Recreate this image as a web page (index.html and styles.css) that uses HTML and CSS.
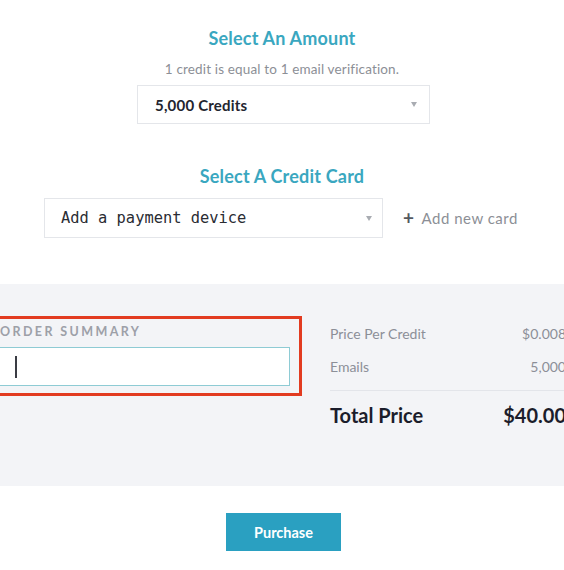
FILE: index.html
```html
<!DOCTYPE html>
<html lang="en">
<head>
<meta charset="utf-8">
<title>Purchase Credits</title>
<link rel="stylesheet" href="styles.css">
</head>
<body>
<main class="page">
  <section class="block amount">
    <h2 class="title">Select An Amount</h2>
    <p class="note">1 credit is equal to 1 email verification.</p>
    <div class="select select-amount">
      <span class="select-value">5,000 Credits</span>
      <span class="caret"></span>
    </div>
  </section>

  <section class="block card">
    <h2 class="title">Select A Credit Card</h2>
    <div class="card-row">
      <div class="select select-card">
        <span class="select-value mono">Add a payment device</span>
        <span class="caret"></span>
      </div>
      <a class="add-card"><span class="plus">+</span>Add new card</a>
    </div>
  </section>

  <section class="summary">
    <div class="summary-inner">
      <div class="order">
        <div class="order-label">ORDER SUMMARY</div>
        <div class="order-input"><span class="cursor"></span></div>
      </div>
      <div class="totals">
        <div class="row"><span>Price Per Credit</span><span>$0.008</span></div>
        <div class="row"><span>Emails</span><span>5,000</span></div>
        <div class="row total"><span>Total Price</span><span>$40.00</span></div>
      </div>
    </div>
  </section>

  <div class="actions">
    <button class="purchase">Purchase</button>
  </div>
</main>
</body>
</html>
```

FILE: styles.css
```css
* { box-sizing: border-box; }
html, body {
  margin: 0;
  padding: 0;
  background: #ffffff;
  overflow: hidden;
}
body {
  font-family: Lato, "Noto Sans", sans-serif;
  color: #1d1f2e;
}
.page {
  width: 564px;
  height: 570px;
  display: flex;
  flex-direction: column;
  overflow: hidden;
}
.block {
  display: flex;
  flex-direction: column;
  align-items: center;
}
.amount { padding-top: 27px; }
.title {
  margin: 0;
  font-size: 18px;
  font-weight: 700;
  color: #3aa7c0;
  line-height: 23px;
  letter-spacing: 0.2px;
}
.note {
  margin: 11px 0 0;
  font-size: 13.5px;
  line-height: 17px;
  color: #8c8f96;
  letter-spacing: 0.15px;
}
.select {
  display: flex;
  align-items: center;
  justify-content: space-between;
  background: #fff;
  border: 1px solid #e4e6ea;
}
.select-amount {
  margin-top: 7px;
  margin-left: 3px;
  width: 293px;
  height: 39px;
  padding: 0 12px 0 17px;
}
.select-value {
  font-size: 15px;
  font-weight: 700;
  color: #23252f;
  letter-spacing: 0.2px;
}
.mono {
  font-family: "DejaVu Sans Mono", "Liberation Mono", monospace;
  font-weight: 400;
  font-size: 15.4px;
  letter-spacing: 0;
  color: #2a2c33;
}
.caret {
  width: 0;
  height: 0;
  border-left: 3.5px solid transparent;
  border-right: 3.5px solid transparent;
  border-top: 5px solid #a9acb2;
}
.card { padding-top: 41px; }
.card-row {
  margin-top: 10px;
  margin-left: 3px;
  display: flex;
  align-items: center;
  gap: 20px;
}
.select-card {
  width: 339px;
  height: 40px;
  padding: 0 10px 0 16px;
}
.add-card {
  font-size: 15px;
  color: #8c8f96;
  display: flex;
  align-items: center;
  letter-spacing: 0.5px;
  width: 120px;
}
.plus {
  font-size: 19px;
  font-weight: 700;
  color: #55585f;
  margin-right: 7px;
  line-height: 14px;
}
.summary {
  margin-top: 46px;
  height: 202px;
  background: #f3f4f7;
  padding-top: 32px;
}
.summary-inner {
  margin-left: -22px;
  width: 600px;
  display: grid;
  grid-template-columns: 324px 236px;
  column-gap: 28px;
  align-items: start;
}
.order {
  border: 3px solid #e23b20;
  padding: 5px 9px 7px 22px;
}
.order-label {
  font-size: 12.5px;
  font-weight: 700;
  letter-spacing: 2.4px;
  color: #9da0a8;
  line-height: 16px;
  margin-left: -3px;
}
.order-input {
  margin-top: 7px;
  height: 39px;
  margin-left: -22px;
  background: #fff;
  border: 1px solid #8ecbd4;
  display: flex;
  align-items: center;
  padding-left: 33px;
}
.cursor {
  width: 1.5px;
  height: 22px;
  background: #3a3c44;
}
.totals {
  padding-top: 9px;
}
.row {
  display: flex;
  justify-content: space-between;
  font-size: 14px;
  color: #8c8f98;
  line-height: 17px;
  margin-bottom: 16px;
}
.row.total {
  border-top: 1px solid #e3e5ea;
  margin-top: -1px;
  padding-top: 13px;
  font-size: 20px;
  font-weight: 700;
  color: #1b1d2b;
  line-height: 22px;
}
.actions {
  display: flex;
  justify-content: center;
  padding-top: 27px;
}
.purchase {
  width: 115px;
  height: 38px;
  margin-left: 3px;
  border: none;
  background: #2aa0c1;
  color: #fff;
  font-family: Lato, "Noto Sans", sans-serif;
  font-size: 14.5px;
  font-weight: 700;
}
```
